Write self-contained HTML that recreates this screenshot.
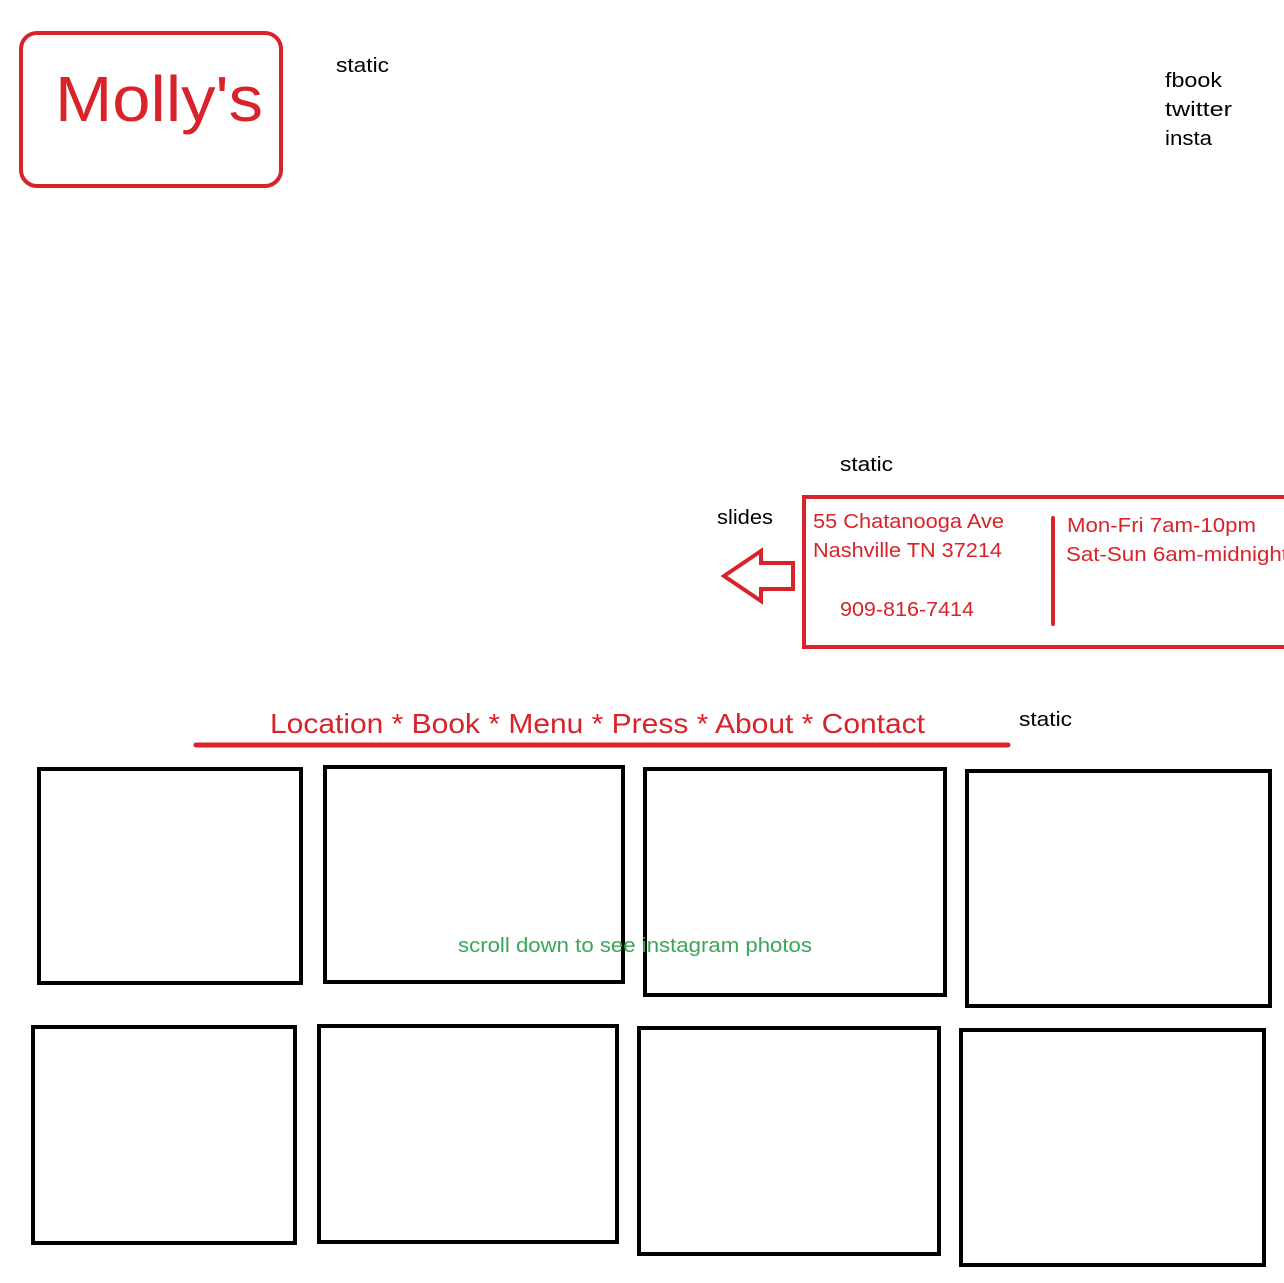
<!DOCTYPE html>
<html><head><meta charset="utf-8"><style>
html,body{margin:0;padding:0;background:#fff;width:1284px;height:1283px;overflow:hidden}
svg{display:block}
text{font-family:"Liberation Sans",sans-serif}
</style></head><body>
<svg width="1284" height="1283" viewBox="0 0 1284 1283" xmlns="http://www.w3.org/2000/svg">
<g fill="none" stroke="#d8232a" stroke-width="4">
<rect x="21" y="33" width="260" height="153" rx="16"/>
<rect x="804" y="497" width="484" height="150"/>
<polygon points="724,576 761,551 761,563 793,563 793,589 761,589 761,601" stroke-linejoin="miter"/>
</g>
<line x1="1053" y1="518" x2="1053" y2="624" stroke="#d8232a" stroke-width="4" stroke-linecap="round"/>
<line x1="196" y1="745" x2="1008" y2="745" stroke="#d8232a" stroke-width="5" stroke-linecap="round"/>
<text x="55" y="121" font-size="64" fill="#d8232a" textLength="208" lengthAdjust="spacingAndGlyphs">Molly's</text>
<g fill="#d8232a" font-size="20">
<text x="813" y="528" textLength="191" lengthAdjust="spacingAndGlyphs">55 Chatanooga Ave</text>
<text x="813" y="557" textLength="189" lengthAdjust="spacingAndGlyphs">Nashville TN 37214</text>
<text x="840" y="616" textLength="134" lengthAdjust="spacingAndGlyphs">909-816-7414</text>
<text x="1067" y="532" textLength="189" lengthAdjust="spacingAndGlyphs">Mon-Fri 7am-10pm</text>
<text x="1066" y="561" textLength="222" lengthAdjust="spacingAndGlyphs">Sat-Sun 6am-midnight</text>
</g>
<text x="270" y="733" font-size="28" fill="#d8232a" textLength="655" lengthAdjust="spacingAndGlyphs">Location * Book * Menu * Press * About * Contact</text>
<g fill="#000" font-size="20">
<text x="336" y="72" textLength="53" lengthAdjust="spacingAndGlyphs">static</text>
<text x="1165" y="87" textLength="57" lengthAdjust="spacingAndGlyphs">fbook</text>
<text x="1165" y="116" textLength="67" lengthAdjust="spacingAndGlyphs">twitter</text>
<text x="1165" y="145" textLength="47" lengthAdjust="spacingAndGlyphs">insta</text>
<text x="840" y="471" textLength="53" lengthAdjust="spacingAndGlyphs">static</text>
<text x="717" y="524" textLength="56" lengthAdjust="spacingAndGlyphs">slides</text>
<text x="1019" y="726" textLength="53" lengthAdjust="spacingAndGlyphs">static</text>
</g>
<g fill="none" stroke="#000" stroke-width="4">
<rect x="39" y="769" width="262" height="214"/>
<rect x="325" y="767" width="298" height="215"/>
<rect x="645" y="769" width="300" height="226"/>
<rect x="967" y="771" width="303" height="235"/>
<rect x="33" y="1027" width="262" height="216"/>
<rect x="319" y="1026" width="298" height="216"/>
<rect x="639" y="1028" width="300" height="226"/>
<rect x="961" y="1030" width="303" height="235"/>
</g>
<text x="458" y="952" font-size="20" fill="#3aa65a" textLength="354" lengthAdjust="spacingAndGlyphs">scroll down to see instagram photos</text>
</svg>
</body></html>
